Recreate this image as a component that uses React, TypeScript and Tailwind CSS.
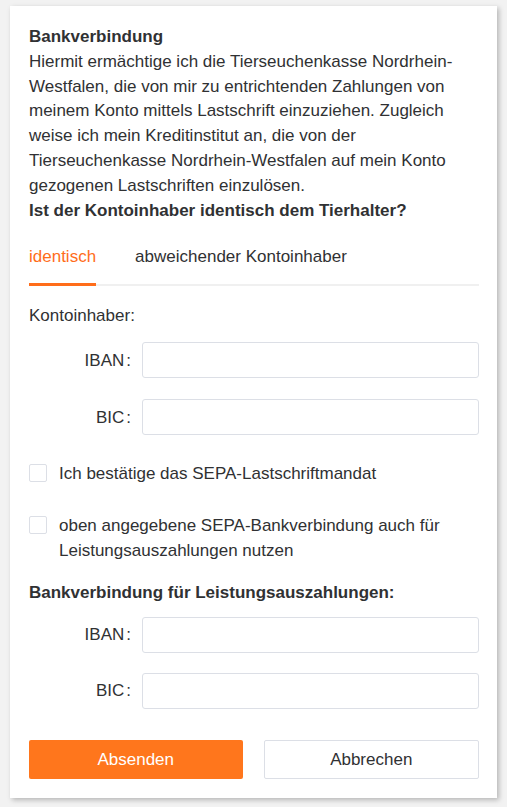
import { useState } from 'react'

const Field = ({ label }: { label: string }) => (
  <div className="flex items-center">
    <label className="w-[113px] pr-[11px] text-right">
      {label}
      <span className="ml-[2px]">:</span>
    </label>
    <input className="h-[36px] flex-1 rounded-[3px] border border-[#dcdfe6] bg-white outline-none" />
  </div>
)

const Box = () => <span className="mt-[3px] h-[18px] w-[18px] shrink-0 rounded-[2px] border border-[#dcdfe6] bg-white" />

export default function App() {
  const [tab, setTab] = useState(0)
  return (
    <div className="min-h-[807px] bg-[#f2f2f2] px-[10px] pt-[6px] pb-[10px] font-['Liberation_Sans',Arial,sans-serif] text-[17px] text-[#303133]">
      <div className="bg-white pt-[19px] pr-[18px] pb-[19px] pl-[19px] shadow-[2px_2px_5px_rgba(0,0,0,0.25)]">
        <div className="leading-[24.8px]">
          <p className="font-bold">Bankverbindung</p>
          <p>
            Hiermit ermächtige ich die Tierseuchenkasse Nordrhein-Westfalen, die von mir zu entrichtenden Zahlungen von
            meinem Konto mittels Lastschrift einzuziehen. Zugleich weise ich mein Kreditinstitut an, die von der
            Tierseuchenkasse Nordrhein-Westfalen auf mein Konto gezogenen Lastschriften einzulösen.
          </p>
          <p className="font-bold">Ist der Kontoinhaber identisch dem Tierhalter?</p>
        </div>

        <div className="mt-[12px] flex border-b-2 border-[#f0f0f0]">
          {['identisch', 'abweichender Kontoinhaber'].map((t, i) => (
            <button
              key={t}
              onClick={() => setTab(i)}
              className={
                i === tab
                  ? '-mb-[2px] border-b-[3px] border-[#ff6d1a] pt-[9px] pb-[13px] text-[#ff6d1a]'
                  : '-mb-[2px] border-b-[3px] border-transparent pt-[9px] pb-[13px] pl-[39px]'
              }
            >
              {t}
            </button>
          ))}
        </div>

        <p className="mt-[17px]">Kontoinhaber:</p>

        <div className="mt-[14px] flex flex-col gap-[21px]">
          <Field label="IBAN" />
          <Field label="BIC" />
        </div>

        <div className="mt-[26px] flex flex-col gap-[27px] leading-[25px]">
          <div className="flex gap-[12px]">
            <Box />
            <span>Ich bestätige das SEPA-Lastschriftmandat</span>
          </div>
          <div className="flex gap-[12px]">
            <Box />
            <span>
              oben angegebene SEPA-Bankverbindung auch für
              <br />
              Leistungsauszahlungen nutzen
            </span>
          </div>
        </div>

        <p className="mt-[17px] font-bold">Bankverbindung für Leistungsauszahlungen:</p>

        <div className="mt-[11px] flex flex-col gap-[20px]">
          <Field label="IBAN" />
          <Field label="BIC" />
        </div>

        <div className="mt-[31px] flex gap-[21px]">
          <button className="h-[39px] flex-1 rounded-[2px] bg-[#ff761c] text-white">Absenden</button>
          <button className="h-[39px] flex-1 rounded-[2px] border border-[#dcdfe6] bg-white">Abbrechen</button>
        </div>
      </div>
    </div>
  )
}
